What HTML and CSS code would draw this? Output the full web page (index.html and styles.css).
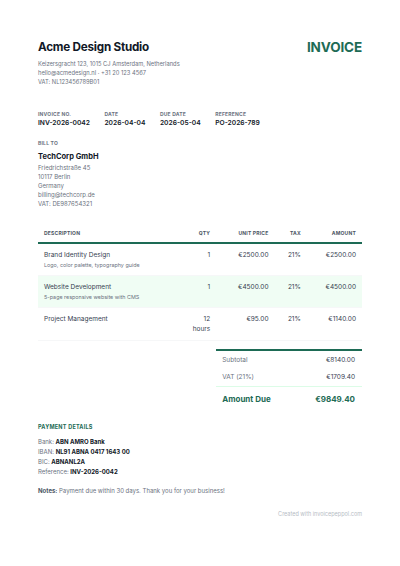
FILE: index.html
```html
<!DOCTYPE html>
<html lang="en">
<head>
<meta charset="utf-8">
<title>Invoice INV-2026-0042</title>
<link rel="stylesheet" href="styles.css">
</head>
<body>
<div class="page">
  <header class="top">
    <div class="company">
      <h1 class="company-name">Acme Design Studio</h1>
      <div class="muted-lines">
        <div>Keizersgracht 123, 1015 CJ Amsterdam, Netherlands</div>
        <div>hello@acmedesign.nl · +31 20 123 4567</div>
        <div>VAT: NL123456789B01</div>
      </div>
    </div>
    <div class="doc-title">INVOICE</div>
  </header>

  <section class="meta">
    <div class="meta-item"><div class="label">Invoice No.</div><div class="meta-value">INV-2026-0042</div></div>
    <div class="meta-item"><div class="label">Date</div><div class="meta-value">2026-04-04</div></div>
    <div class="meta-item"><div class="label">Due Date</div><div class="meta-value">2026-05-04</div></div>
    <div class="meta-item"><div class="label">Reference</div><div class="meta-value">PO-2026-789</div></div>
  </section>

  <section class="bill">
    <div class="label">Bill To</div>
    <div class="client-name">TechCorp GmbH</div>
    <div class="muted-lines">
      <div>Friedrichstraße 45</div>
      <div>10117 Berlin</div>
      <div>Germany</div>
      <div>billing@techcorp.de</div>
      <div>VAT: DE987654321</div>
    </div>
  </section>

  <table class="items">
    <colgroup>
      <col class="c-desc"><col class="c-qty"><col class="c-price"><col class="c-tax"><col class="c-amt">
    </colgroup>
    <thead>
      <tr><th class="l">Description</th><th>Qty</th><th>Unit Price</th><th>Tax</th><th>Amount</th></tr>
    </thead>
    <tbody>
      <tr>
        <td class="l"><div class="item-name">Brand Identity Design</div><div class="item-sub">Logo, color palette, typography guide</div></td>
        <td>1</td><td>€2500.00</td><td>21%</td><td>€2500.00</td>
      </tr>
      <tr class="alt">
        <td class="l"><div class="item-name">Website Development</div><div class="item-sub">5-page responsive website with CMS</div></td>
        <td>1</td><td>€4500.00</td><td>21%</td><td>€4500.00</td>
      </tr>
      <tr>
        <td class="l"><div class="item-name">Project Management</div></td>
        <td>12 hours</td><td>€95.00</td><td>21%</td><td>€1140.00</td>
      </tr>
    </tbody>
  </table>

  <div class="totals-wrap">
    <div class="totals">
      <div class="t-row"><span class="t-label">Subtotal</span><span class="t-val">€8140.00</span></div>
      <div class="t-row"><span class="t-label">VAT (21%)</span><span class="t-val">€1709.40</span></div>
      <div class="t-row due"><span>Amount Due</span><span>€9849.40</span></div>
    </div>
  </div>

  <section class="payment">
    <div class="label green">Payment Details</div>
    <div class="pay-lines">
      <div>Bank: <b>ABN AMRO Bank</b></div>
      <div>IBAN: <b>NL91 ABNA 0417 1643 00</b></div>
      <div>BIC: <b>ABNANL2A</b></div>
      <div>Reference: <b>INV-2026-0042</b></div>
    </div>
  </section>

  <p class="notes"><b>Notes:</b> Payment due within 30 days. Thank you for your business!</p>

  <footer class="foot">Created with invoicepeppol.com</footer>
</div>
</body>
</html>
```

FILE: styles.css
```css
* { box-sizing: border-box; }
html, body { margin: 0; padding: 0; background: #ffffff; }
body {
  font-family: Inter, "Noto Sans", "Liberation Sans", sans-serif;
  color: #111827;
}
.page {
  width: 400px;
  padding: 40px 38px 20px;
}
.top {
  display: flex;
  justify-content: space-between;
  align-items: flex-start;
}
.company-name {
  margin: 0;
  font-size: 11.7px;
  line-height: 14px;
  font-weight: 700;
  letter-spacing: -0.02em;
  color: #111827;
}
.muted-lines {
  font-size: 6px;
  line-height: 9px;
  color: #6b7280;
}
.company .muted-lines { margin-top: 5px; font-size: 5.75px; }
.doc-title {
  font-size: 13.5px;
  line-height: 14px;
  font-weight: 700;
  color: #1d6b55;
  letter-spacing: -0.01em;
}
.label {
  font-size: 5px;
  line-height: 7px;
  font-weight: 700;
  text-transform: uppercase;
  letter-spacing: 0.04em;
  color: #6b7280;
}
.label.green { color: #1d6b55; font-size: 5.5px; }
.meta {
  display: flex;
  gap: 14.5px;
  margin-top: 25px;
}
.meta-value {
  font-size: 6.7px;
  line-height: 10px;
  font-weight: 600;
  color: #111827;
}
.bill { margin-top: 11.5px; }
.client-name {
  margin-top: 4px;
  font-size: 7.5px;
  line-height: 11px;
  font-weight: 700;
}
.bill .muted-lines { margin-top: 1px; }

.items {
  width: 100%;
  margin-top: 16px;
  border-collapse: collapse;
  table-layout: fixed;
}
.c-desc { width: 45%; }
.c-qty { width: 10%; }
.c-price { width: 18%; }
.c-tax { width: 10%; }
.c-amt { width: 17%; }
.items th {
  font-size: 5px;
  line-height: 7px;
  font-weight: 700;
  text-transform: uppercase;
  letter-spacing: 0.04em;
  color: #4b5563;
  text-align: right;
  padding: 6px 6px 5px;
  border-bottom: 2px solid #1d6b55;
}
.items td {
  font-size: 6.5px;
  line-height: 10px;
  color: #374151;
  text-align: right;
  vertical-align: top;
  padding: 6px 6px 6px;
  border-bottom: 1px solid #f6f7f8;
}
.items .l { text-align: left; }
.items tr.alt td { background: #f0fdf4; }
.item-sub {
  margin-top: 1px;
  font-size: 5.4px;
  line-height: 8px;
  color: #6b7280;
}

.totals-wrap {
  display: flex;
  justify-content: flex-end;
  margin-top: 8px;
}
.totals {
  width: 45%;
  border-top: 2px solid #1d6b55;
}
.t-row {
  display: flex;
  justify-content: space-between;
  padding: 4px 7px 3px 6px;
  font-size: 6.5px;
  line-height: 10px;
}
.t-row + .t-row { padding-top: 4px; padding-bottom: 4px; }
.t-label { color: #6b7280; }
.t-val { color: #374151; }
.t-row.due {
  border-top: 1px solid #dcfce7;
  padding: 6px 7px 6px 6px;
  font-size: 8px;
  line-height: 12px;
  font-weight: 700;
  color: #1d6b55;
}

.payment { margin-top: 13px; }
.pay-lines {
  margin-top: 6px;
  font-size: 6px;
  line-height: 10.2px;
  color: #6b7280;
}
.pay-lines b, .notes b { font-weight: 700; color: #111827; }
.notes {
  margin: 9px 0 0;
  font-size: 6px;
  line-height: 10px;
  color: #6b7280;
}
.notes b { color: #4b5563; }
.foot {
  margin-top: 14px;
  text-align: right;
  font-size: 5.5px;
  line-height: 8px;
  color: #b6bcc5;
}
```
